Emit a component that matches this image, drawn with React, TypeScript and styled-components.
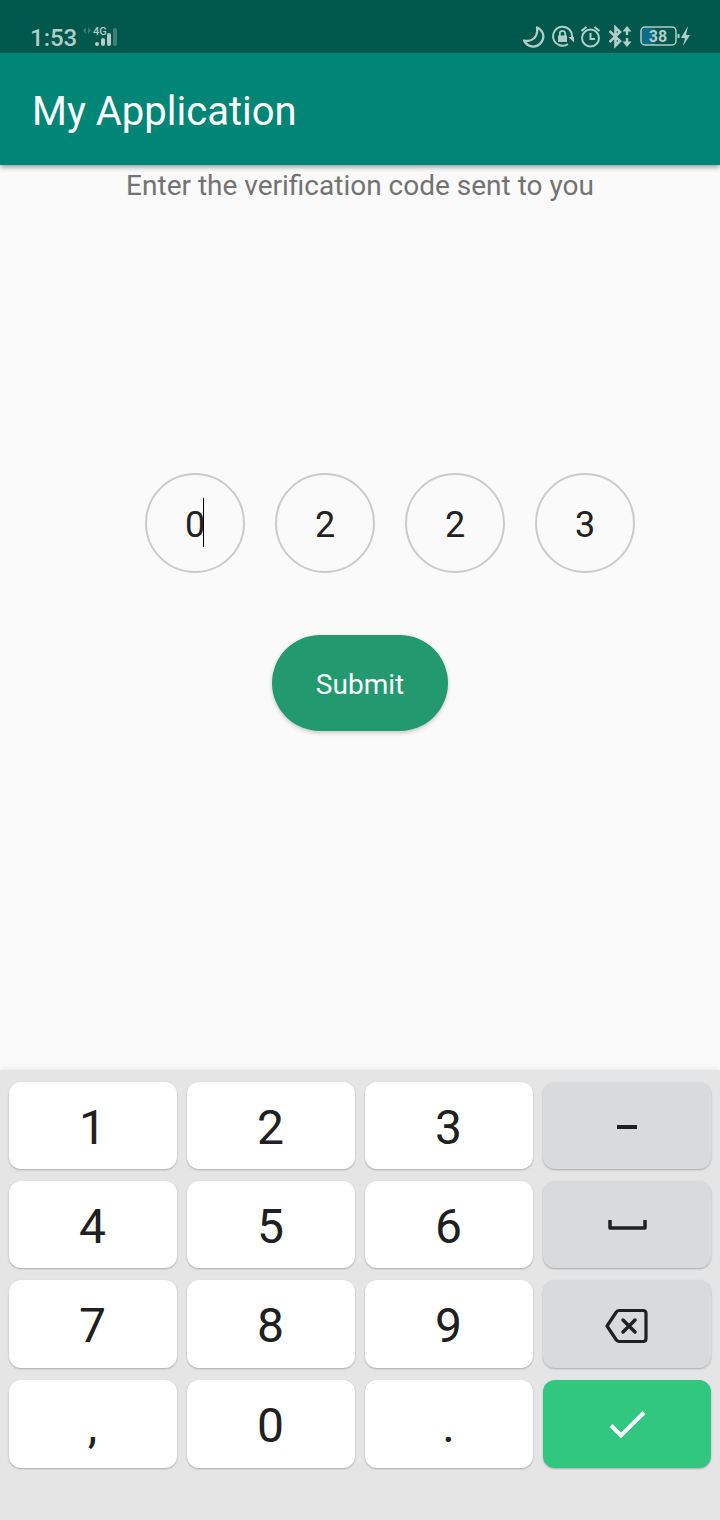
import React, { useState } from 'react';
import styled, { createGlobalStyle } from 'styled-components';

const GlobalStyle = createGlobalStyle`
  *, *::before, *::after { box-sizing: border-box; }
  body {
    margin: 0;
    background: #fafafa;
    font-family: Roboto, "Liberation Sans", sans-serif;
  }
  button, input { font-family: inherit; }
`;

const Screen = styled.div`
  display: flex;
  flex-direction: column;
  min-height: 100vh;
`;

const StatusBar = styled.div`
  position: relative;
  z-index: 1;
  display: flex;
  align-items: center;
  justify-content: space-between;
  height: 53px;
  padding: 21px 28px 0 30px;
  background: #00574b;
  color: #b2cdc9;
`;

const StatusGroup = styled.div<{ $gap: number }>`
  display: flex;
  align-items: center;
  gap: ${({ $gap }) => $gap}px;
`;

const Clock = styled.span`
  padding-top: 2px;
  font-size: 24px;
  font-weight: 500;
  line-height: 28px;
`;

const StatusIcon = styled.svg`
  display: block;
  height: 24px;
  fill: none;
  stroke: currentColor;
  stroke-width: 2;
`;

const AppBar = styled.header`
  position: relative;
  display: flex;
  align-items: center;
  height: 112px;
  padding: 6px 32px 0;
  background: #008577;
  box-shadow: 0 2px 5px rgba(0, 0, 0, 0.4);
`;

const AppTitle = styled.h1`
  margin: 0;
  color: #fff;
  font-size: 40px;
  font-weight: 400;
  line-height: 48px;
`;

const Form = styled.form`
  display: flex;
  flex: 1;
  flex-direction: column;
  align-items: center;
`;

const Prompt = styled.p`
  margin: 5px 0 0;
  color: #737373;
  font-size: 28px;
  line-height: 32px;
`;

const CodeRow = styled.div`
  display: flex;
  gap: 30px;
  margin-top: 271px;
  padding-left: 60px;
`;

const DigitCell = styled.label`
  position: relative;
  display: block;
`;

const DigitInput = styled.input`
  display: block;
  width: 100px;
  height: 100px;
  padding: 4px 0 0;
  border: 2px solid #cbcbcb;
  border-radius: 50%;
  outline: none;
  background: transparent;
  color: #212121;
  caret-color: transparent;
  font-size: 36px;
  line-height: 44px;
  text-align: center;
`;

const Caret = styled.span`
  position: absolute;
  top: 25px;
  left: 58px;
  width: 1px;
  height: 49px;
  background: #000;
`;

const SubmitButton = styled.button`
  width: 176px;
  height: 96px;
  margin: 62px 0;
  padding: 3px 0 0;
  border: 0;
  border-radius: 48px;
  background: #22996e;
  box-shadow: 0 2px 4px rgba(0, 0, 0, 0.2);
  color: #fff;
  font-size: 28px;
  line-height: 32px;
`;

const Keyboard = styled.div`
  display: grid;
  grid-template-columns: repeat(4, 1fr);
  grid-template-rows: 87px 87px 88px 88px;
  gap: 12px 10px;
  padding: 12px 9px 52px;
  background: #e5e5e5;
  box-shadow: 0 -2px 5px rgba(0, 0, 0, 0.06);
`;

const keyColors = {
  digit: '#ffffff',
  action: '#d9dadc',
  confirm: '#31c77f',
};

type KeyKind = keyof typeof keyColors;

const Key = styled.button<{ $kind: KeyKind }>`
  display: flex;
  align-items: center;
  justify-content: center;
  padding: 4px 1px 0 0;
  border: 0;
  border-radius: 12px;
  background: ${({ $kind }) => keyColors[$kind]};
  box-shadow: 0 1px 2px rgba(0, 0, 0, 0.26);
  color: ${({ $kind }) => ($kind === 'confirm' ? '#fff' : '#202020')};
  font-size: 48px;
  line-height: 56px;
`;

const KeyIcon = styled.svg`
  display: block;
  width: 48px;
  height: 40px;
  fill: none;
  stroke: currentColor;
  stroke-width: 4;
`;

const SignalIcon = () => (
  <StatusIcon width="36" viewBox="0 0 36 24" aria-label="4G signal">
    <path d="M3 2v7L0 5.500zM5 2v7l3-3.500z" fill="currentColor" stroke="none" opacity="0.3" />
    <text x="10" y="10" fontSize="11" fontWeight="500" fill="currentColor" stroke="none">4G</text>
    <g strokeWidth="4" strokeLinecap="round">
      <path d="M14 19v0.1M20 15v4M26 10v9" />
      <path d="M32 5v14" opacity="0.35" />
    </g>
  </StatusIcon>
);

const MoonIcon = () => (
  <StatusIcon width="23" viewBox="0 0 23 24" aria-label="Do not disturb">
    <path d="M14 2.500C20.500 5.500 22 12 18.500 17 14 23.500 4.500 23 1 15.500 8 17.500 15.500 12.500 14 2.500Z" strokeWidth="2.300" strokeLinejoin="round" />
  </StatusIcon>
);

const RotationLockIcon = () => (
  <StatusIcon width="23" viewBox="0 0 23 24" aria-label="Rotation locked">
    <path d="M16 19A9.500 9.500 0 1 1 20 12.500" />
    <path d="M16.500 12h5.500v5.500z" fill="currentColor" stroke="none" />
    <path d="M6 10.500h9v6.500H6z" fill="currentColor" stroke="none" />
    <path d="M7.800 11V8.500a2.700 2.700 0 0 1 5.400 0V11" strokeWidth="1.800" />
  </StatusIcon>
);

const AlarmIcon = () => (
  <StatusIcon width="22" viewBox="0 0 22 24" aria-label="Alarm set">
    <circle cx="9.500" cy="13" r="8.500" />
    <path d="M0.500 6l5-4M13.500 2l5 4M9.500 8v6h4.500" />
  </StatusIcon>
);

const BluetoothIcon = () => (
  <StatusIcon width="25" viewBox="0 0 25 24" aria-label="Bluetooth connected">
    <path d="M0.500 6 11 16l-4.500 4.500v-18L11 7 0.500 17" strokeWidth="2.600" />
    <path d="M18 3v7M18 13v7" strokeWidth="2.400" />
    <path d="M13.500 6.500 18 1l4.500 5.500zM13.500 16.500 18 22l4.500-5.500z" fill="currentColor" stroke="none" />
  </StatusIcon>
);

const BatteryIcon = () => (
  <StatusIcon width="52" viewBox="0 0 52 24" aria-label="Battery 38 percent, charging">
    <path d="M5 3h10v17H5a3 3 0 0 1-3-3V6a3 3 0 0 1 3-3z" fill="#0b6c87" stroke="none" />
    <rect x="1" y="2" width="35" height="18" rx="4" strokeWidth="1.500" />
    <path d="M38.500 9v4" />
    <text x="18" y="17" fontSize="16" fontWeight="700" textAnchor="middle" fill="currentColor" stroke="none">38</text>
    <path d="M48 1l-7 12h4l-2 8 7-11h-4z" fill="currentColor" stroke="none" />
  </StatusIcon>
);

const DashIcon = () => (
  <KeyIcon viewBox="0 0 48 40"><path d="M14 19h20" /></KeyIcon>
);

const SpaceIcon = () => (
  <KeyIcon viewBox="0 0 48 40"><path d="M7 13v8h35v-8" strokeLinejoin="round" strokeWidth="3.500" /></KeyIcon>
);

const BackspaceIcon = () => (
  <KeyIcon viewBox="0 0 48 40" strokeLinejoin="round" strokeLinecap="round">
    <path d="M16 4.500h24q3 0 3 3v25q0 3-3 3H16q-2 0-3-2L4 20l9-13.500q1-2 3-2z" strokeWidth="3.200" />
    <path d="M20 14l12 12M32 14 20 26" strokeWidth="3.500" />
  </KeyIcon>
);

const CheckIcon = () => (
  <KeyIcon viewBox="0 0 48 40"><path d="M8 19.500 18 29.500 41 6.500" /></KeyIcon>
);

interface KeyDef {
  value: string;
  kind: KeyKind;
  label?: string;
  icon?: React.ReactNode;
}

const digit = (value: string): KeyDef => ({ value, kind: 'digit' });

const keys: KeyDef[] = [
  digit('1'), digit('2'), digit('3'),
  { value: '-', kind: 'action', label: 'Minus', icon: <DashIcon /> },
  digit('4'), digit('5'), digit('6'),
  { value: ' ', kind: 'action', label: 'Space', icon: <SpaceIcon /> },
  digit('7'), digit('8'), digit('9'),
  { value: 'backspace', kind: 'action', label: 'Backspace', icon: <BackspaceIcon /> },
  digit(','), digit('0'), digit('.'),
  { value: 'done', kind: 'confirm', label: 'Done', icon: <CheckIcon /> },
];

export default function App() {
  const [code, setCode] = useState(['0', '2', '2', '3']);
  const [active, setActive] = useState(0);

  const setDigit = (index: number, value: string) =>
    setCode((current) => current.map((item, i) => (i === index ? value : item)));

  const press = (value: string) => {
    if (value === 'backspace') setDigit(active, '');
    else if (/^\d$/.test(value)) {
      setDigit(active, value);
      setActive(Math.min(active + 1, code.length - 1));
    }
  };

  return (
    <Screen>
      <GlobalStyle />
      <StatusBar>
        <StatusGroup $gap={6}>
          <Clock>1:53</Clock>
          <SignalIcon />
        </StatusGroup>
        <StatusGroup $gap={6}>
          <MoonIcon />
          <RotationLockIcon />
          <AlarmIcon />
          <BluetoothIcon />
          <BatteryIcon />
        </StatusGroup>
      </StatusBar>
      <AppBar>
        <AppTitle>My Application</AppTitle>
      </AppBar>
      <Form onSubmit={(event) => event.preventDefault()}>
        <Prompt>Enter the verification code sent to you</Prompt>
        <CodeRow>
          {code.map((value, index) => (
            <DigitCell key={index}>
              <DigitInput
                aria-label={`Digit ${index + 1}`}
                inputMode="numeric"
                maxLength={1}
                value={value}
                onFocus={() => setActive(index)}
                onChange={(event) => setDigit(index, event.target.value)}
              />
              {index === active && <Caret />}
            </DigitCell>
          ))}
        </CodeRow>
        <SubmitButton type="submit">Submit</SubmitButton>
      </Form>
      <Keyboard>
        {keys.map(({ value, kind, label, icon }) => (
          <Key key={value} type="button" $kind={kind} aria-label={label} onClick={() => press(value)}>
            {icon ?? value}
          </Key>
        ))}
      </Keyboard>
    </Screen>
  );
}
